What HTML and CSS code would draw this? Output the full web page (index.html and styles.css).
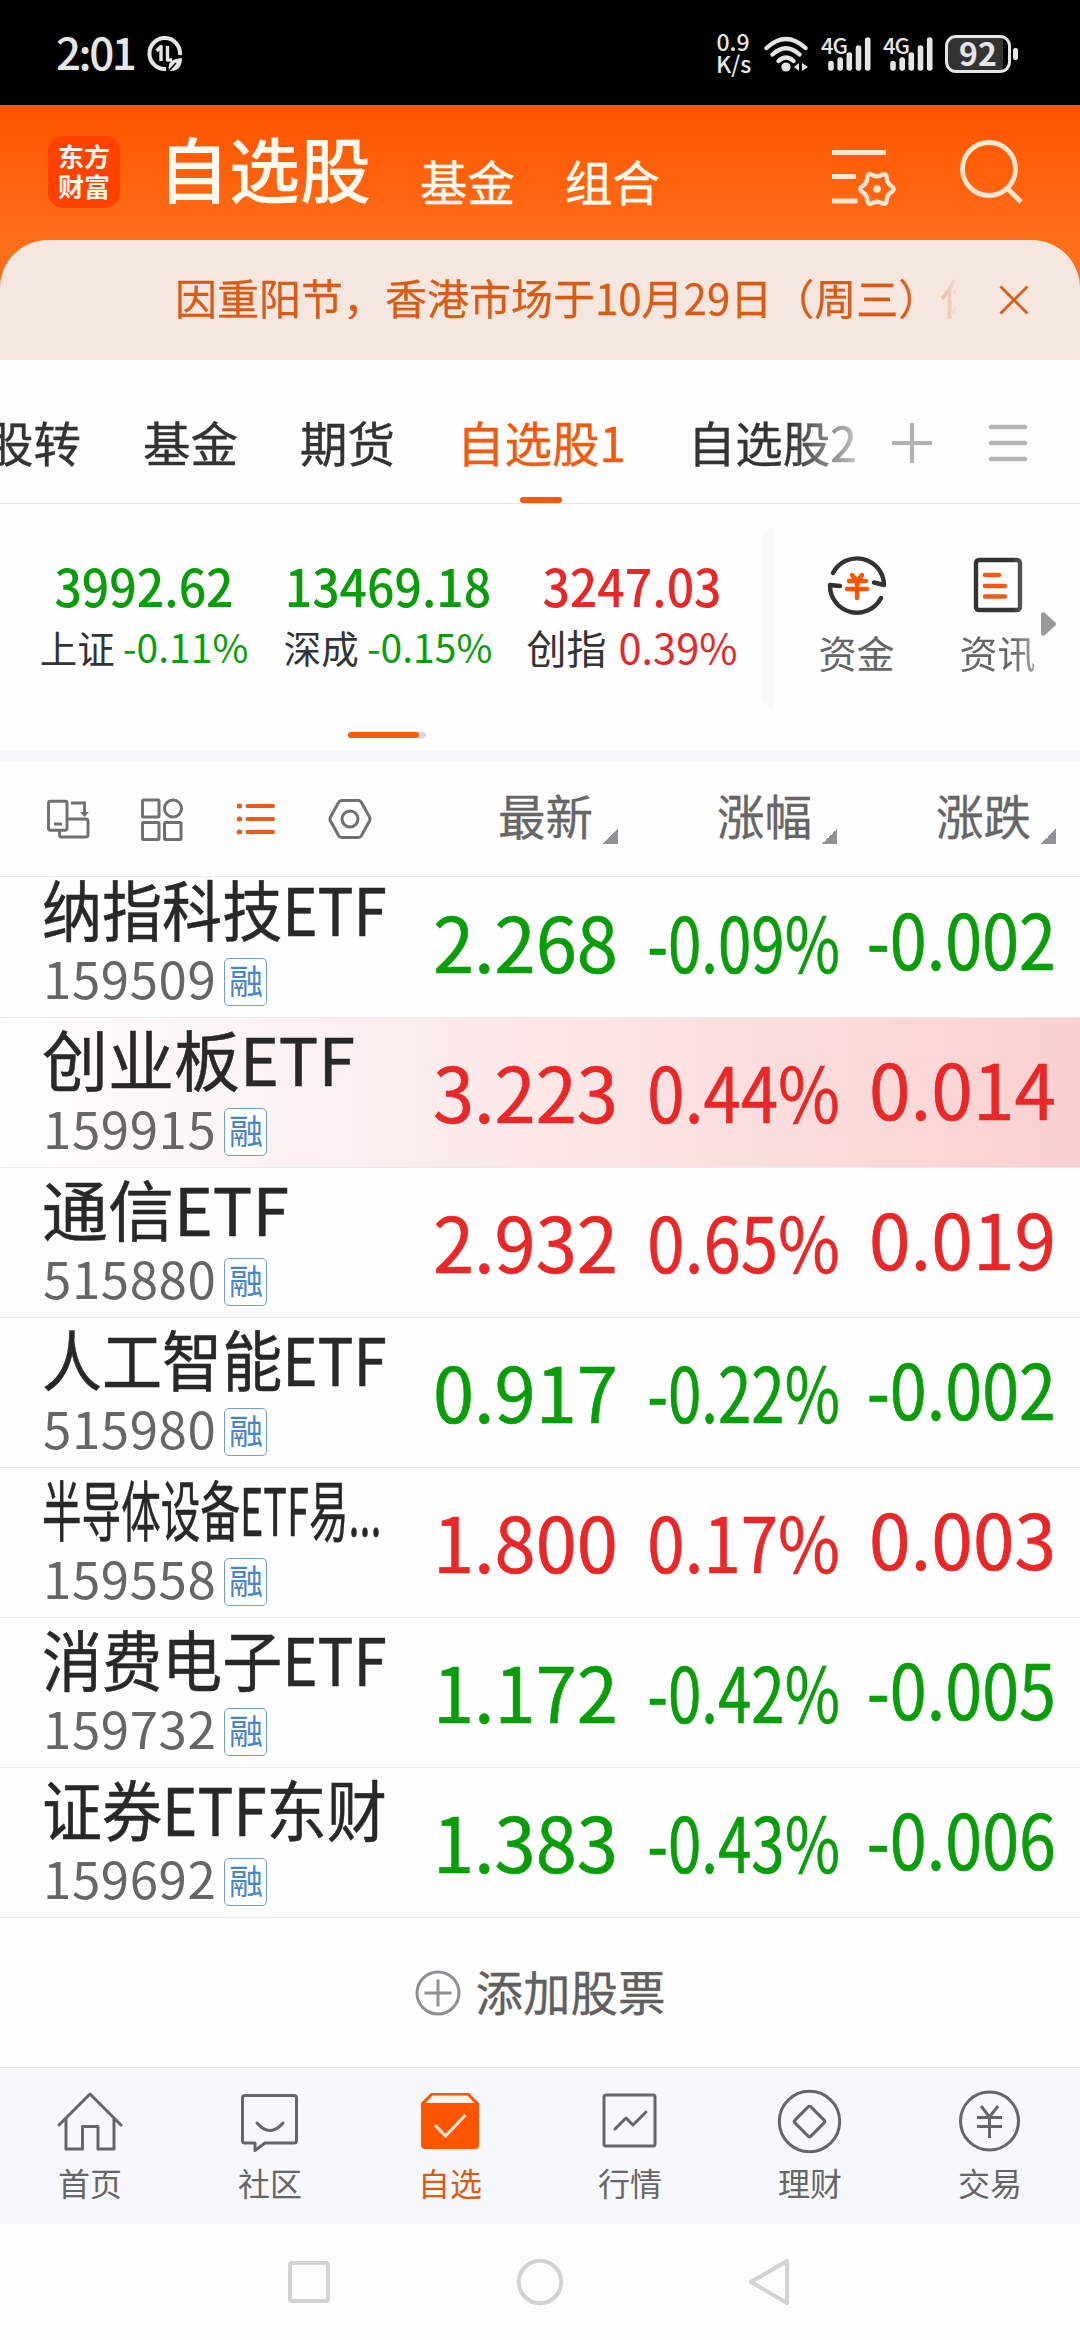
FILE: index.html
```html
<!DOCTYPE html>
<html lang="zh-CN">
<head>
  <meta charset="UTF-8" />
  <meta name="viewport" content="width=device-width, initial-scale=1.0" />
  <title>自选股</title>
  <link rel="stylesheet" href="styles.css">
</head>
<body>
  <div class="statusbar">
    <span class="clock">2:01</span>
    <svg class="data-saver" width="36" height="38" viewBox="0 0 36 38">
      <path d="M33 20 A15.3 15.5 0 1 0 19 34" fill="none" stroke="#e6e6e6" stroke-width="4"/>
      <path d="M9.5 16 L14 11.500 V26 M20.500 11 V25 H25" fill="none" stroke="#e6e6e6" stroke-width="3.4" stroke-linejoin="round"/>
      <path d="M22 36 C20 26 26 24 35 23 C35 31 31 37 22 36 Z" fill="#e6e6e6"/>
      <path d="M21 37 L29 28" stroke="#000" stroke-width="1.6"/>
    </svg>
    <div class="status-right">
      <div class="speed"><span>0.9</span><span>K/s</span></div>
      <svg class="wifi" width="44" height="36" viewBox="0 0 44 36">
        <g fill="none" stroke="#e6e6e6" stroke-width="4.4" stroke-linecap="round">
          <path d="M2.5 12 Q22 -6 41.5 12"/>
          <path d="M8.5 18.5 Q22 6 35.5 18.5"/>
          <path d="M14.5 25 Q22 18 29.5 25"/>
        </g>
        <circle cx="22" cy="31" r="4.6" fill="#e6e6e6"/>
        <path d="M30 31 l5 -4 v8 z M44 31 l-6 -4 v8 z" fill="#e6e6e6"/>
      </svg>
      <div class="signal">
        <span>4G</span>
        <svg width="44" height="34" viewBox="0 0 44 34">
          <path d="M3 26.5V31M12.2 23V31M21.3 18V31M30.5 11V31M39.7 3V31" stroke="#e6e6e6" stroke-width="5.6" stroke-linecap="round"/>
        </svg>
      </div>
      <div class="signal">
        <span>4G</span>
        <svg width="44" height="34" viewBox="0 0 44 34">
          <path d="M3 26.5V31M12.2 23V31M21.3 18V31M30.5 11V31M39.7 3V31" stroke="#e6e6e6" stroke-width="5.6" stroke-linecap="round"/>
        </svg>
      </div>
      <div class="battery">92</div>
      <i class="battery-cap"></i>
    </div>
  </div>

  <div class="top">
    <header class="header">
      <div class="logo"><span>东方</span><span>财富</span></div>
      <h1>自选股</h1>
      <a class="head-link">基金</a>
      <a class="head-link">组合</a>
      <div class="head-icons">
        <svg width="64" height="58" viewBox="0 0 64 58" fill="none" stroke="#ffe6d2" stroke-width="5">
          <path d="M0 4.5H54M0 28.5H24M0 53H25.5"/>
          <path d="M59.5 38.1Q55 35.3 54.7 29.9Q54.5 24.5 49.7 27Q45 29.5 40.3 27Q35.5 24.5 35.3 29.9Q35 35.3 30.5 38.1Q26 41 30.5 43.9Q35 46.7 35.3 52.1Q35.5 57.5 40.3 55Q45 52.5 49.7 55Q54.5 57.5 54.7 52.1Q55 46.7 59.5 43.9Q64 41 59.5 38.1Z" stroke-width="4.4"/>
          <circle cx="45" cy="41" r="3.8" fill="#ffe6d2" stroke="none"/>
        </svg>
        <svg width="64" height="66" viewBox="0 0 64 66" fill="none" stroke="#ffe6d2" stroke-width="4.8">
          <circle cx="30" cy="31" r="26.5"/>
          <path d="M48 50 L62 64"/>
        </svg>
      </div>
    </header>
    <div class="notice">
      <p>因重阳节，香港市场于10月29日（周三）休</p>
      <svg width="30" height="30" viewBox="0 0 30 30"><path d="M1.5 1.5 L28.5 28.5 M28.5 1.5 L1.5 28.5" stroke="#d9601a" stroke-width="3"/></svg>
    </div>
  </div>

  <nav class="tabs">
    <div class="tab-scroll">
      <a>股转</a>
      <a>基金</a>
      <a>期货</a>
      <a class="current">自选股1</a>
      <a>自选股2</a>
    </div>
    <svg class="plus" width="40" height="40" viewBox="0 0 40 40"><path d="M20 1V39M1 20H39" stroke="#b3b3b3" stroke-width="4" stroke-linecap="round"/></svg>
    <svg class="menu" width="38" height="38" viewBox="0 0 38 38"><path d="M2 3H36M2 19H36M2 35H36" stroke="#b3b3b3" stroke-width="4.4" stroke-linecap="round"/></svg>
  </nav>

  <section class="indices">
    <div class="index down">
      <b>3992.62</b>
      <p>上证 <span>-0.11%</span></p>
    </div>
    <div class="index down">
      <b>13469.18</b>
      <p>深成 <span>-0.15%</span></p>
    </div>
    <div class="index up large">
      <b>3247.03</b>
      <p>创指 <span>0.39%</span></p>
    </div>
    <i class="divider"></i>
    <a class="shortcut">
      <svg width="60" height="60" viewBox="0 0 60 60" fill="none" stroke="#333" stroke-width="4.4" stroke-linecap="round" stroke-linejoin="round">
        <path d="M6 18 A27 27 0 0 1 57 30 L47 27.5"/>
        <path d="M54 43 A27 27 0 0 1 3 30 L13 31"/>
        <path d="M25 20 L30 26 L35 20 M22 26H39M20 34H40M30 26V43" stroke="#ff5500"/>
      </svg>
      <span>资金</span>
    </a>
    <a class="shortcut fade">
      <svg width="60" height="60" viewBox="0 0 60 60" fill="none" stroke="#333" stroke-width="4.4" stroke-linecap="round">
        <rect x="8" y="5" width="44" height="50" rx="3"/>
        <path d="M17 20H31M17 31H37M17 41.5H37" stroke="#f05a14"/>
      </svg>
      <span>资讯</span>
    </a>
    <svg class="more" width="15" height="26" viewBox="0 0 15 26"><path d="M0 3 Q1 0 4 2 L14 11 Q16 13 14 15 L4 24 Q1 26 0 23 Z" fill="#999"/></svg>
    <div class="pager"><i></i></div>
  </section>

  <div class="toolbar">
    <div class="views">
      <svg width="44" height="44" viewBox="0 0 44 44" fill="none" stroke="#707070" stroke-width="2.9">
        <rect x="2.5" y="4.3" width="18.5" height="29" rx="2"/>
        <path d="M8 27H16M21 22H39.5Q42 22 42 24V38Q42 40 39.5 40H15.5Q13.5 40 13.5 38V33"/>
        <path d="M25 6H38.5V16"/>
        <path d="M34 15 H43 L38.5 20 Z" fill="#707070" stroke="none"/>
      </svg>
      <svg width="44" height="44" viewBox="0 0 44 44" fill="none" stroke="#707070" stroke-width="3">
        <rect x="2.5" y="3" width="16.5" height="17" rx="1"/>
        <circle cx="33" cy="11.5" r="8.5"/>
        <rect x="2.5" y="25.5" width="16.5" height="17" rx="1"/>
        <rect x="24.5" y="25.5" width="16.5" height="17" rx="1"/>
      </svg>
      <svg width="44" height="44" viewBox="0 0 44 44" fill="none" stroke="#ea5b17" stroke-width="4.2" stroke-linecap="round">
        <path d="M13.5 9H39M13.5 22H39M13.5 35H39"/>
        <path d="M5.3 9h.4M5.3 22h.4M5.3 35h.4" stroke-width="5"/>
      </svg>
      <svg width="44" height="44" viewBox="0 0 44 44" fill="none" stroke="#707070" stroke-width="3">
        <path d="M13.5 3.500H30.5Q32.5 3.5 33.5 5.5L41.5 20Q42.5 22 41.5 24L33.5 38.5Q32.5 40.5 30.5 40.5H13.5Q11.5 40.5 10.5 38.5L2.5 24Q1.5 22 2.5 20L10.5 5.5Q11.5 3.5 13.5 3.5Z"/>
        <circle cx="22" cy="22" r="8"/>
      </svg>
    </div>
    <div class="col">最新<i></i></div>
    <div class="col">涨幅<i></i></div>
    <div class="col">涨跌<i></i></div>
  </div>

  <main class="list">
    <div class="row down">
      <div class="stock"><h2 class="fit-7">纳指科技ETF</h2><p>159509<em>融</em></p></div>
      <span class="price">2.268</span><span class="pct">-0.09%</span><span class="diff">-0.002</span>
    </div>
    <div class="row up flash">
      <div class="stock"><h2>创业板ETF</h2><p>159915<em>融</em></p></div>
      <span class="price">3.223</span><span class="pct">0.44%</span><span class="diff">0.014</span>
    </div>
    <div class="row up">
      <div class="stock"><h2>通信ETF</h2><p>515880<em>融</em></p></div>
      <span class="price">2.932</span><span class="pct">0.65%</span><span class="diff">0.019</span>
    </div>
    <div class="row down">
      <div class="stock"><h2 class="fit-7">人工智能ETF</h2><p>515980<em>融</em></p></div>
      <span class="price">0.917</span><span class="pct">-0.22%</span><span class="diff">-0.002</span>
    </div>
    <div class="row up">
      <div class="stock"><h2 class="fit-10">半导体设备ETF易...</h2><p>159558<em>融</em></p></div>
      <span class="price">1.800</span><span class="pct">0.17%</span><span class="diff">0.003</span>
    </div>
    <div class="row down">
      <div class="stock"><h2 class="fit-7">消费电子ETF</h2><p>159732<em>融</em></p></div>
      <span class="price">1.172</span><span class="pct">-0.42%</span><span class="diff">-0.005</span>
    </div>
    <div class="row down">
      <div class="stock"><h2 class="fit-7">证券ETF东财</h2><p>159692<em>融</em></p></div>
      <span class="price">1.383</span><span class="pct">-0.43%</span><span class="diff">-0.006</span>
    </div>
  </main>

  <div class="add">
    <svg width="46" height="46" viewBox="0 0 46 46" fill="none" stroke="#8f8f94" stroke-width="3">
      <circle cx="23" cy="23" r="21"/>
      <path d="M23 9.5V36.5M9.5 23H36.5"/>
    </svg>
    <span>添加股票</span>
  </div>

  <footer class="bottom-nav">
    <a>
      <svg width="66" height="66" viewBox="0 0 66 66" fill="none" stroke="#666" stroke-width="3" stroke-linecap="round" stroke-linejoin="round">
        <path d="M2 37 L33 6 L64 37M9 31V61H25.5V38.5H41V61H57V31"/>
      </svg>
      <span>首页</span>
    </a>
    <a>
      <svg width="66" height="66" viewBox="0 0 66 66" fill="none" stroke="#666" stroke-width="3" stroke-linecap="round" stroke-linejoin="round">
        <path d="M8 7.5H57Q59.5 7.5 59.5 10V53Q59.5 55 57 55H28L18 62.5V55H8Q5.5 55 5.5 53V10Q5.5 7.5 8 7.5Z"/>
        <path d="M20 35 Q33 50 46 35"/>
      </svg>
      <span>社区</span>
    </a>
    <a class="current">
      <svg width="66" height="66" viewBox="0 0 66 66">
        <path d="M14 5H52L62 15V57Q62 61 58 61H8Q4 61 4 57V15Z" fill="#ff5500"/>
        <path d="M15.5 7.5H50.5L57.5 15H8.5Z" fill="#fff5ee"/>
        <path d="M18 37 L28.5 48 L48.5 27" fill="none" stroke="#ffe9db" stroke-width="3"/>
      </svg>
      <span>自选</span>
    </a>
    <a>
      <svg width="66" height="66" viewBox="0 0 66 66" fill="none" stroke="#666" stroke-width="3" stroke-linecap="round" stroke-linejoin="round">
        <rect x="7" y="7" width="51" height="51" rx="2"/>
        <path d="M18 41 L29 30 L36 37 L49 24"/>
      </svg>
      <span>行情</span>
    </a>
    <a>
      <svg width="66" height="66" viewBox="0 0 66 66" fill="none" stroke="#666" stroke-width="3">
        <circle cx="32.5" cy="33.5" r="30.2"/>
        <rect x="21.2" y="22.2" width="22.6" height="22.6" rx="2" transform="rotate(45 32.5 33.5)"/>
      </svg>
      <span>理财</span>
    </a>
    <a>
      <svg width="66" height="66" viewBox="0 0 66 66" fill="none" stroke="#666" stroke-width="3">
        <circle cx="32.5" cy="33" r="29"/>
        <path d="M24 18 L32.5 29 L41 18M20 29.5H45M20 38.5H45M32.5 29V50"/>
      </svg>
      <span>交易</span>
    </a>
  </footer>

  <div class="system-nav">
    <svg width="60" height="60" viewBox="0 0 60 60" fill="none" stroke="#d2d2d2" stroke-width="4"><rect x="11" y="11" width="38" height="38" rx="2"/></svg>
    <svg width="60" height="60" viewBox="0 0 60 60" fill="none" stroke="#d2d2d2" stroke-width="4"><circle cx="30" cy="30" r="21.2"/></svg>
    <svg width="60" height="60" viewBox="0 0 60 60" fill="none" stroke="#d2d2d2" stroke-width="4" stroke-linejoin="round"><path d="M46 9V51L10 30Z"/></svg>
  </div>
</body>
</html>
```

FILE: styles.css
```css
* {
  box-sizing: border-box;
}
body {
  margin: 0;
  width: 1080px;
  height: 2340px;
  overflow: hidden;
  background: #fefefe;
  color: #333;
  font-family: "Noto Sans CJK SC", sans-serif;
}
h1, h2, p {
  margin: 0;
  font-weight: 400;
}
svg {
  display: block;
  flex: none;
}

/* status bar */
.statusbar {
  display: flex;
  height: 105px;
  padding: 0 62px 0 56px;
  background: #000;
  color: #e6e6e6;
}
.clock {
  width: 91px;
  margin-top: 29px;
  font-size: 44px;
  line-height: 44px;
  font-weight: 500;
  letter-spacing: -2.5px;
}
.data-saver {
  margin-top: 35px;
}
.status-right {
  display: flex;
  margin-left: auto;
}
.speed {
  display: flex;
  flex-direction: column;
  width: 34px;
  margin: 31px 14px 0 0;
  text-align: center;
  font-size: 23px;
  line-height: 21.5px;
  font-weight: 500;
}
.wifi {
  margin: 36px 13px 0 0;
}
.signal {
  position: relative;
  width: 51px;
  margin: 37px 11px 0 0;
}
.signal span {
  position: absolute;
  left: 0;
  top: -4px;
  font-size: 22px;
  line-height: 22px;
  letter-spacing: -1px;
  font-weight: 500;
}
.signal svg {
  margin-left: 7px;
}
.battery {
  width: 66px;
  height: 38px;
  margin-top: 35px;
  border: 3px solid #e6e6e6;
  border-radius: 11px;
  background: linear-gradient(90deg, #333 55px, #000 55px);
  text-align: center;
  font-size: 32px;
  line-height: 28px;
  font-weight: 700;
}
.battery-cap {
  width: 5px;
  height: 12px;
  margin: 48px 0 0 2px;
  border-radius: 2px;
  background: #e6e6e6;
}

/* orange header */
.top {
  height: 255px;
  background: linear-gradient(#ff5500 10px, #ff6e19 135px);
}
.header {
  display: flex;
  height: 135px;
  padding-left: 48px;
  color: #fffaf0;
}
.logo {
  display: flex;
  flex-direction: column;
  width: 72px;
  height: 72px;
  margin: 31px 38px 0 0;
  padding-top: 5px;
  border-radius: 15px;
  background: #ff4200;
  text-align: center;
  font-size: 26px;
  line-height: 30px;
  font-weight: 700;
}
.header h1 {
  width: 262px;
  margin-top: 26px;
  font-size: 71px;
  line-height: 71px;
  font-weight: 500;
}
.head-link {
  width: 145px;
  margin-top: 52px;
  font-size: 47.5px;
  line-height: 48px;
  -webkit-text-stroke: 0.4px;
}
.head-icons {
  display: flex;
  gap: 63px;
  margin: 33px 0 0 122px;
}
.head-icons svg:first-child {
  margin-top: 10px;
}
.notice {
  display: flex;
  align-items: flex-start;
  height: 120px;
  padding: 35px 0 0 175px;
  border-radius: 48px 48px 0 0;
  background: #f5e7e0;
  color: #d95c14;
}
.notice p {
  width: 781px;
  margin-right: 42px;
  overflow: hidden;
  white-space: nowrap;
  font-size: 42px;
  line-height: 44px;
  -webkit-text-stroke: 0.3px;
  -webkit-mask-image: linear-gradient(90deg, #000 730px, transparent 785px);
  mask-image: linear-gradient(90deg, #000 730px, transparent 785px);
}
.notice svg {
  margin: 10px 0 0 1px;
}

/* group tabs */
.tabs {
  display: flex;
  height: 144px;
  border-bottom: 1px solid #e3e3e3;
}
.tab-scroll {
  display: flex;
  gap: 62px;
  width: 857px;
  padding-top: 57px;
  overflow: hidden;
  white-space: nowrap;
  font-size: 47.5px;
  line-height: 50px;
  -webkit-text-stroke: 0.4px;
  -webkit-mask-image: linear-gradient(90deg, #000 790px, transparent 885px);
  mask-image: linear-gradient(90deg, #000 790px, transparent 885px);
}
.tab-scroll a {
  flex: none;
}
.tab-scroll a:first-child {
  margin-left: -14px;
}
.tab-scroll .current {
  display: flex;
  flex-direction: column;
  align-items: center;
  color: #f25a10;
}
.tab-scroll .current::after {
  content: "";
  width: 42px;
  height: 6px;
  margin-top: 30px;
  border-radius: 3px;
  background: #f25a10;
}
.plus {
  margin: 63px 57px 0 35px;
}
.menu {
  margin-top: 64px;
}

/* market indices */
.indices {
  position: relative;
  display: flex;
  height: 246px;
  padding-left: 22px;
}
.index {
  width: 244px;
  padding-top: 56px;
  text-align: center;
  white-space: nowrap;
}
.index b {
  display: block;
  font-size: 51px;
  line-height: 51px;
  font-weight: 500;
  transform: scaleX(0.945);
}
.index p {
  margin-top: 15px;
  font-size: 37.5px;
  line-height: 41px;
  color: #333;
}
.index span {
  font-size: 39px;
}
.index.large p {
  font-size: 40px;
}
.index.large span {
  margin-left: 3px;
  font-size: 41.5px;
}
.up b, .up p span {
  color: #e82828;
}
.down b, .down p span {
  color: #0a9d0a;
}
.divider {
  width: 12px;
  height: 180px;
  margin: 24px 12px 0 8px;
  border-radius: 12px 0 0 12px;
  background: #f7f8fa;
}
.shortcut {
  display: flex;
  flex-direction: column;
  align-items: center;
  width: 141px;
  padding-top: 51px;
  color: #666;
  font-size: 38px;
  line-height: 38px;
}
.shortcut span {
  margin-top: 18px;
}
.shortcut.fade {
  -webkit-mask-image: linear-gradient(90deg, #000 85px, transparent 140px);
  mask-image: linear-gradient(90deg, #000 85px, transparent 140px);
}
.more {
  position: absolute;
  left: 1041px;
  top: 107px;
}
.pager {
  position: absolute;
  left: 348px;
  top: 228px;
  width: 78px;
  height: 6px;
  border-radius: 3px;
  background: #d5d6da;
}
.pager i {
  display: block;
  width: 71px;
  height: 6px;
  border-radius: 3px;
  background: #fa5a0a;
}

/* column header */
.toolbar {
  display: flex;
  height: 127px;
  border-top: 12px solid #f6f7f9;
  border-bottom: 1px solid #ebebeb;
}
.views {
  display: flex;
  gap: 50px;
  width: 399px;
  padding: 35px 0 0 46px;
}
.col {
  display: flex;
  justify-content: flex-end;
  width: 219px;
  padding-top: 28px;
  color: #666;
  font-size: 47.5px;
  line-height: 50px;
  -webkit-text-stroke: 0.3px;
}
.col i {
  width: 15px;
  height: 15px;
  margin: 39px 0 0 10px;
  background: linear-gradient(135deg, transparent 50%, #909096 50%);
}

/* watch list, scrolled by a few pixels */
.list {
  height: 1041px;
  overflow: hidden;
}
.row {
  display: flex;
  height: 150px;
  border-bottom: 1px solid #ebebeb;
}
.row:first-child {
  margin-top: -9px;
}
.flash {
  background: linear-gradient(90deg, #fefefe, #fad0d0);
}
.stock {
  width: 399px;
  padding: 6px 0 0 42px;
}
.stock h2 {
  width: max-content;
  font-size: 66px;
  line-height: 66px;
  color: #282828;
  transform-origin: left;
  -webkit-text-stroke: 0.5px;
}
.stock h2.fit-7 {
  transform: scaleX(0.91);
}
.stock h2.fit-10 {
  transform: scaleX(0.6);
}
.stock p {
  display: flex;
  margin-top: 12px;
  padding-left: 1px;
  font-size: 51px;
  line-height: 51px;
  letter-spacing: 0.6px;
  color: #666;
}
.stock em {
  width: 43px;
  height: 48px;
  margin: 6px 0 0 8px;
  border: 1.5px solid #6f9fd2;
  border-radius: 5px;
  background: #fff;
  color: #4585cc;
  text-align: center;
  font-size: 34px;
  font-style: normal;
  line-height: 41px;
  letter-spacing: 0;
}
.price, .pct, .diff {
  display: flex;
  justify-content: flex-end;
  width: 219px;
  margin-top: 34px;
  font-size: 76px;
  line-height: 76px;
  transform-origin: right;
  -webkit-text-stroke: 0.6px;
}
.price {
  transform: scaleX(0.975);
}
.pct {
  width: 222px;
}
.diff {
  width: 216px;
  margin-top: 31px;
  transform: scaleX(0.985);
}
.up .pct {
  transform: scaleX(0.885);
}
.down .pct {
  transform: scaleX(0.79);
}
.down .diff {
  transform: scaleX(0.875);
}
.up > span {
  color: #e82828;
}
.down > span {
  color: #0a9d0a;
}

.add {
  display: flex;
  align-items: center;
  justify-content: center;
  gap: 15px;
  height: 149px;
  color: #606060;
  font-size: 47.5px;
  line-height: 50px;
  -webkit-text-stroke: 0.3px;
}
.add span {
  margin-top: -4px;
}

/* bottom navigation */
.bottom-nav {
  display: flex;
  height: 157px;
  border-top: 1px solid #e2e2e4;
  background: #f7f8fb;
}
.bottom-nav a {
  display: flex;
  flex-direction: column;
  align-items: center;
  width: 180px;
  padding-top: 20px;
  color: #666;
  font-size: 32px;
  line-height: 32px;
}
.bottom-nav span {
  margin-top: 12px;
}
.bottom-nav .current {
  color: #dc5a14;
}
.system-nav {
  display: flex;
  justify-content: center;
  gap: 171px;
  height: 116px;
  padding-top: 28px;
  background: #fcfcfc;
}
```
